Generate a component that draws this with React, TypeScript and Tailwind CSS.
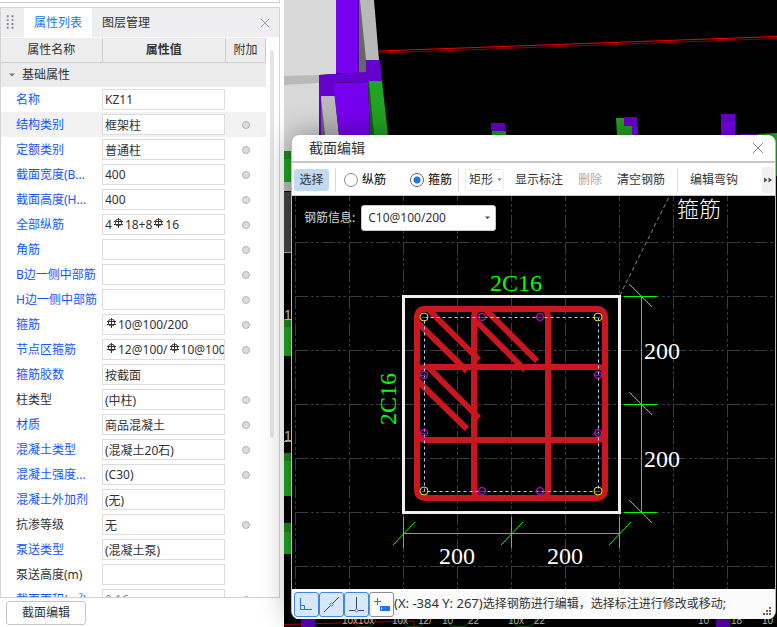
import { useState } from "react";
import type { ReactNode } from "react";

type Property = {
  name: string;
  value: string;
  plain?: boolean;
  extra?: boolean;
  active?: boolean;
  readOnly?: boolean;
};

// "&" marks the ribbed bar sign inside a value
const PROPERTIES: Property[] = [
  { name: "名称", value: "KZ11" },
  { name: "结构类别", value: "框架柱", extra: true, active: true },
  { name: "定额类别", value: "普通柱", extra: true },
  { name: "截面宽度(B...", value: "400", extra: true },
  { name: "截面高度(H...", value: "400", extra: true },
  { name: "全部纵筋", value: "4&18+8&16", extra: true },
  { name: "角筋", value: "", extra: true },
  { name: "B边一侧中部筋", value: "", extra: true },
  { name: "H边一侧中部筋", value: "", extra: true },
  { name: "箍筋", value: "&10@100/200", extra: true },
  { name: "节点区箍筋", value: "&12@100/&10@100", extra: true },
  { name: "箍筋胶数", value: "按截面" },
  { name: "柱类型", value: "(中柱)", plain: true, extra: true },
  { name: "材质", value: "商品混凝土", extra: true },
  { name: "混凝土类型", value: "(混凝土20石)", extra: true },
  { name: "混凝土强度...", value: "(C30)", extra: true },
  { name: "混凝土外加剂", value: "(无)" },
  { name: "抗渗等级", value: "无", plain: true, extra: true },
  { name: "泵送类型", value: "(混凝土泵)" },
  { name: "泵送高度(m)", value: "", plain: true },
  { name: "截面面积(m²)", value: "0.16", extra: true, readOnly: true },
];

const GRID_X = [295, 349, 403, 457, 511, 565, 619, 673, 727];
const GRID_Y = [242, 296, 350, 404, 458, 512, 566];

const CORNER_BARS = [
  [424, 317],
  [598, 317],
  [424, 491],
  [598, 491],
];

const SIDE_BARS = [
  [482, 317],
  [540, 317],
  [424, 375],
  [598, 375],
  [424, 433],
  [598, 433],
  [482, 491],
  [540, 491],
];

function BarSign() {
  return (
    <svg
      viewBox="0 0 13 12"
      className="inline-block h-3 w-[13px] align-baseline"
      fill="none"
      stroke="#333"
      aria-hidden="true"
    >
      <path d="M6.5 1v10M2 4.5h9M2 7.5h9" />
      <rect x="3.5" y="2.5" width="6" height="6" rx="2" />
    </svg>
  );
}

function CloseIcon({ className }: { className: string }) {
  return (
    <svg viewBox="0 0 12 12" className={className} fill="none" stroke="currentColor">
      <path d="M1 1l10 10M11 1L1 11" />
    </svg>
  );
}

function Caret({ className }: { className: string }) {
  return (
    <svg viewBox="0 0 6 4" className={className} fill="currentColor" aria-hidden="true">
      <path d="M0 0.5h6L3 3.5z" />
    </svg>
  );
}

function PropertyField({ id, property }: { id: string; property: Property }) {
  const box =
    "block h-[21px] w-full overflow-hidden border border-[#dcdcdc] bg-white px-[2px] text-[12px] leading-[19px] whitespace-nowrap outline-none focus:border-[#1b76e8]";

  if (property.value.includes("&")) {
    const parts = property.value.split("&");
    return (
      <div
        id={id}
        role="textbox"
        aria-label={property.name}
        contentEditable
        suppressContentEditableWarning
        className={box}
      >
        {parts.map((part, i) => (
          <span key={i}>
            {i > 0 && <BarSign />}
            {part}
          </span>
        ))}
      </div>
    );
  }

  return (
    <input
      id={id}
      type="text"
      defaultValue={property.value}
      readOnly={property.readOnly}
      className={property.readOnly ? `${box} text-[#888]` : box}
    />
  );
}

function PropertyTable() {
  return (
    <table className="w-full table-fixed border-collapse text-[12px]">
      <colgroup>
        <col className="w-[101px]" />
        <col />
        <col className="w-10" />
      </colgroup>
      <thead>
        <tr className="h-6 bg-[#ededee]">
          <th className="border-r border-b border-[#cdcdcf] p-0 font-normal">属性名称</th>
          <th className="border-r border-b border-[#cdcdcf] p-0 font-bold">属性值</th>
          <th className="border-r border-b border-[#cdcdcf] p-0 font-normal">附加</th>
        </tr>
      </thead>
      <tbody>
        <tr className="h-[25px] bg-[#ececec]">
          <th colSpan={3} className="p-0 text-left font-normal">
            <button type="button" className="flex items-center gap-[7px] pl-2">
              <Caret className="w-[6px] text-[#777]" />
              基础属性
            </button>
          </th>
        </tr>
        {PROPERTIES.map((property, i) => (
          <tr key={property.name} className={property.active ? "h-[25px] bg-[#f2f2f2]" : "h-[25px]"}>
            <td className="p-0 pl-[15px]">
              <label
                htmlFor={`property-${i}`}
                className={
                  property.plain
                    ? "block truncate text-[#333]"
                    : "block overflow-hidden whitespace-nowrap text-[#1456ff]"
                }
              >
                {property.name}
              </label>
            </td>
            <td className="p-0 pr-px">
              <PropertyField id={`property-${i}`} property={property} />
            </td>
            <td className="p-0 text-center">
              {property.extra && (
                <input
                  type="checkbox"
                  aria-label={`附加 ${property.name}`}
                  className="mx-auto block size-2 appearance-none rounded-full border border-[#b4b4ba] bg-[#dcdce0] checked:bg-[#1b76e8]"
                />
              )}
            </td>
          </tr>
        ))}
      </tbody>
    </table>
  );
}

function PropertyPanel() {
  return (
    <aside className="flex w-[284px] shrink-0 flex-col bg-white">
      <div className="mr-1 h-[3px] shrink-0 border-r border-b border-[#cfcfd2]" />
      <section className="mt-1 mr-1 flex min-h-0 flex-1 flex-col border border-[#d4d4d6]">
        <div className="flex h-[29px] shrink-0 items-stretch bg-[#eeeef0] text-[12px]">
          <svg viewBox="0 0 24 29" className="w-[23px]" fill="#888" aria-hidden="true">
            {[7, 11, 15, 19].map((y) => (
              <path key={y} d={`M6 ${y}h2v2h-2zM11 ${y}h2v2h-2z`} />
            ))}
          </svg>
          <div role="tablist" className="flex flex-1">
            <button type="button" role="tab" aria-selected="true" className="bg-white px-[10px] text-[#1b76e8]">
              属性列表
            </button>
            <button type="button" role="tab" aria-selected="false" className="px-[10px]">
              图层管理
            </button>
          </div>
          <button type="button" aria-label="关闭" className="px-[9px] text-[#999]">
            <CloseIcon className="size-[10px]" />
          </button>
        </div>
        <div className="mt-px flex min-h-0 flex-1 overflow-hidden">
          <div className="min-w-0 flex-1">
            <PropertyTable />
          </div>
          <div className="w-[13px] shrink-0 pt-3 pl-1">
            <div className="h-[71%] w-1 rounded-full bg-[#e6e6e8]" />
          </div>
        </div>
      </section>
      <div className="flex shrink-0 px-[6px] pt-[3px] pb-[2px]">
        <button type="button" className="h-6 w-20 rounded-[3px] border border-[#c6c6c8] bg-white text-[12px]">
          截面编辑
        </button>
      </div>
    </aside>
  );
}

function ModelView() {
  return (
    <svg
      viewBox="284 0 493 627"
      preserveAspectRatio="xMinYMin slice"
      className="absolute inset-0 size-full"
      aria-hidden="true"
    >
      <path fill="#d8d8d8" d="M284 0h52v74l-17 1v76h-35z" />
      <path fill="#b9b9b9" d="M284 76l35-1v8l-35 2z" />
      <path fill="#7700ee" d="M336 0h21v73h-21z" />
      <path fill="#4f00a0" d="M357 0h2v73h-2z" />
      <path fill="#666" d="M359 0h2l6 62v11h-8z" />
      <path fill="#b9b9b9" d="M360 0h14l5 60h-13z" />
      <path fill="#6600cc" d="M319 75l47-3V60h14l2 21-49 2 2 13h-14v39h-2z" />
      <path fill="#b9b9b9" d="M321 96h14l4 39h-18z" />
      <path fill="#666" d="M321 98l4 37h-4z" />
      <path fill="#7700ee" d="M333 83l35-1 2 53h-31z" />
      <path fill="#14621a" d="M368 82h2l4 53h-4z" />
      <path fill="#22a322" d="M369 81h13l6 54h-14z" />
      <path stroke="#8c0000" d="M379 53L777 38.500" />
      <path stroke="#f00000" d="M379 51L777 36.500" />
      <path fill="#6600cc" d="M491 123h14v8h-14z" />
      <path fill="#22a322" d="M492 131h14v5h-14z" />
      <path fill="#22a322" d="M616 118h9v8h7v10h-15z" />
      <path fill="#6600cc" d="M624 117h13v9h-13z" />
      <path fill="#7700ee" d="M632 126h6v10h-6z" />
      <path fill="#6600cc" d="M721 114h14v8h-14z" />
      <path fill="#7700ee" d="M721 122h14v14h-14z" />
      <path fill="#6600cc" d="M740 134h20v3h-20z" />
      <path fill="#22a322" d="M758 134l19-1v43h-6z" />
      <path fill="#1f8a20" d="M284 151h8v8h-8zM284 319h8v8h-8zM284 453h8v8h-8zM284 523h8v9h-8z" />
      <path fill="#22a922" d="M284 159h8v23h-8zM284 327h8v29h-8zM284 461h8v35h-8zM284 532h8v22h-8z" />
      <path fill="#c4c4c4" d="M284 182h8v9h-8z" />
      <path fill="#484848" d="M284 192h8v60h-8z" />
      <path stroke="#aaa" d="M284 252.500h8M284 441.500h8" />
      <path
        stroke="#14621a"
        fill="none"
        d="M352 619a12 8 0 0 0 24 0M402 619a12 8 0 0 0 24 0M446 619a12 8 0 0 0 24 0M512 619a12 8 0 0 0 24 0"
      />
      <path stroke="#c00000" d="M284 624.500L414 621v6" fill="none" />
      <path fill="#5c00b8" d="M301 619h14v8h-14zM716 619h14v8h-14z" />
      <g fill="#d0d0d0" className="font-['Liberation_Sans']">
        <g className="text-[14px]">
          <text x="284" y="320">1</text>
          <text x="284" y="441">1</text>
        </g>
        <g className="text-[10px]">
          <text x="342" y="624">10x10x</text>
          <text x="392" y="624">10x</text>
          <text x="418" y="624">12/</text>
          <text x="442" y="624">10</text>
          <text x="468" y="624">22</text>
          <text x="508" y="624">10x</text>
          <text x="534" y="624">22</text>
          <text x="698" y="624">10</text>
          <text x="731" y="624">18</text>
          <text x="762" y="624">10</text>
        </g>
      </g>
    </svg>
  );
}

function SectionDrawing() {
  return (
    <svg
      viewBox="292 196 483 393"
      preserveAspectRatio="xMinYMin meet"
      className="absolute inset-0 size-full"
      fill="none"
      role="img"
      aria-label="柱截面配筋"
    >
      <g stroke="#343b48" strokeDasharray="13 3 3 2 3 3" shapeRendering="crispEdges">
        {GRID_X.map((x) => (
          <path key={x} d={`M${x + 0.5} 188V589`} />
        ))}
        {GRID_Y.map((y) => (
          <path key={y} d={`M295 ${y + 0.5}H775`} />
        ))}
      </g>

      <path stroke="#8a8a8a" strokeDasharray="4 3" d="M668.500 198L620 295" />

      {/* Concrete outline */}
      <rect x="403.500" y="296.500" width="216" height="216" stroke="#f0f0f0" strokeWidth="3" />

      {/* Stirrups and their hooks */}
      <g stroke="#c8171e" strokeWidth="6">
        <rect x="417" y="309" width="188" height="189" rx="7" />
        <rect x="474" y="309" width="74" height="189" rx="7" />
        <rect x="417" y="367" width="188" height="73" rx="7" />
        <path d="M418 323l49 48M428 309l51 51M476 321l49 49M486 310l51 51M418 381l49 48M428 367l51 51" />
      </g>

      <rect x="424.500" y="317.500" width="174" height="174" stroke="#b4d0f4" strokeDasharray="3 3" />

      <g stroke="#f0e020">
        {CORNER_BARS.map(([x, y]) => (
          <g key={`${x}-${y}`}>
            <circle cx={x} cy={y} r="4" />
            <path stroke="#6b6414" d={`M${x - 2} ${y + 0.5}h4`} />
          </g>
        ))}
      </g>
      <g stroke="#ff00ff">
        {SIDE_BARS.map(([x, y]) => (
          <g key={`${x}-${y}`}>
            <circle cx={x} cy={y} r="3.500" />
            <path stroke="#8a108a" d={`M${x - 2} ${y + 0.5}h4`} />
          </g>
        ))}
      </g>

      {/* Dimension lines */}
      <g stroke="#00ff00">
        <path
          shapeRendering="crispEdges"
          d="M403 533.500h217M403.500 517v31M511.500 517v31M619.500 517v31M641.500 296v217M624 296.500h33M624 404.500h33M624 512.500h33"
        />
        <path d="M393 545l22-23M501 545l22-23M609 545l22-23M629 284l23 23M629 392l23 23M629 500l23 23" />
      </g>

      <g className="font-['Liberation_Serif','Noto_Sans_CJK_SC',serif] text-[24px]">
        <g fill="#00ff00" textAnchor="middle">
          <text x="516" y="291">2C16</text>
          <text transform="translate(396 399) rotate(-90)">2C16</text>
        </g>
        <g fill="#fff">
          <text x="439" y="564">200</text>
          <text x="547" y="564">200</text>
          <text x="644" y="359">200</text>
          <text x="644" y="467">200</text>
        </g>
      </g>
      <text x="677" y="217" fill="#fff" className="font-['Noto_Sans_CJK_SC',sans-serif] text-[22px] font-light">
        箍筋
      </text>
    </svg>
  );
}

function ToolRadio({
  label,
  checked,
  onSelect,
}: {
  label: string;
  checked: boolean;
  onSelect: () => void;
}) {
  return (
    <label className="flex shrink-0 items-center gap-1 text-black">
      <input
        type="radio"
        name="bar-kind"
        checked={checked}
        onChange={onSelect}
        className="size-[14px] appearance-none rounded-full border border-[#888] bg-white checked:border-[#666] checked:bg-[radial-gradient(circle,#1b76e8_3px,white_4px)]"
      />
      {label}
    </label>
  );
}

function Divider() {
  return <span className="h-6 w-px shrink-0 bg-[#d8d8da]" />;
}

function SnapButton({ label, on, children }: { label: string; on?: boolean; children: ReactNode }) {
  return (
    <button
      type="button"
      aria-label={label}
      aria-pressed={Boolean(on)}
      className={
        on
          ? "size-[25px] shrink-0 rounded-[3px] border border-[#3d87e8] bg-[#d9e7fb]"
          : "size-[25px] shrink-0 rounded-[3px] border border-[#8c8c8c] bg-white"
      }
    >
      <svg viewBox="0 0 23 23" className="size-[23px]" fill="none" stroke="#33475f">
        {children}
      </svg>
    </button>
  );
}

function SectionDialog() {
  const [kind, setKind] = useState("箍筋");

  return (
    <div
      role="dialog"
      aria-label="截面编辑"
      className="absolute top-[135px] right-px bottom-2 left-[7px] flex flex-col overflow-hidden rounded-lg border-x border-[#b8babd] bg-white shadow-[0_0_30px_rgba(0,0,0,0.4)]"
    >
      <header className="flex h-7 shrink-0 items-center justify-between border-b-2 border-[#c6c7c9] pr-[11px] pl-[17px]">
        <h2 className="text-[14px] leading-6">截面编辑</h2>
        <button type="button" aria-label="关闭" className="text-[#888]">
          <CloseIcon className="size-3" />
        </button>
      </header>

      <div className="flex h-[33px] shrink-0 items-center border-b border-[#c6c7c9] pt-[2px] pr-px pl-[2px] text-[12px]">
        <button type="button" aria-pressed="true" className="h-[22px] w-[35px] shrink-0 rounded-[3px] bg-[#c1d9f1]">
          选择
        </button>
        <div className="flex items-center pl-[6px]">
          <Divider />
        </div>
        <div className="flex gap-6 pr-[6px] pl-2">
          <ToolRadio label="纵筋" checked={kind === "纵筋"} onSelect={() => setKind("纵筋")} />
          <ToolRadio label="箍筋" checked={kind === "箍筋"} onSelect={() => setKind("箍筋")} />
        </div>
        <Divider />
        <div className="relative ml-[6px] shrink-0">
          <select
            aria-label="箍筋形状"
            className="block h-[22px] w-[39px] appearance-none rounded-[3px] border border-[#ececee] bg-white pl-[3px]"
          >
            <option>矩形</option>
          </select>
          <Caret className="pointer-events-none absolute top-[9px] right-[2px] w-[5px] text-[#888]" />
        </div>
        <div className="flex min-w-0 flex-1 items-center gap-[15px] pl-[11px] whitespace-nowrap">
          <button type="button">显示标注</button>
          <button type="button" disabled className="text-[#aaa]">
            删除
          </button>
          <button type="button">清空钢筋</button>
        </div>
        <div className="flex shrink-0 items-center gap-3">
          <Divider />
          <button type="button">编辑弯钩</button>
        </div>
        <button
          type="button"
          aria-label="更多"
          className="ml-6 flex h-[26px] w-3 shrink-0 items-center justify-center rounded-[3px] bg-[#f1f1f2]"
        >
          <svg viewBox="0 0 8 6" className="w-2" fill="#4a5058">
            <path d="M0 0.500l3.500 2.500L0 5.500zM4.500 0.500L8 3 4.500 5.500z" />
          </svg>
        </button>
      </div>

      <div className="relative min-h-0 flex-1 bg-black">
        <SectionDrawing />
        <div className="absolute top-[9px] left-3 flex items-center gap-[6px] text-[12px]">
          <label htmlFor="bar-info" className="text-[#d8d8d8]">
            钢筋信息:
          </label>
          <div className="relative">
            <select
              id="bar-info"
              className="block h-[26px] w-[135px] appearance-none rounded-[3px] border border-[#c8c8c8] bg-white pl-[6px]"
            >
              <option>C10@100/200</option>
            </select>
            <Caret className="pointer-events-none absolute top-[11px] right-[6px] w-[5px] text-[#444]" />
          </div>
        </div>
      </div>

      <footer className="flex h-[30px] shrink-0 items-center bg-[#fbfbfb] pr-1 pl-[2px] text-[12px]">
        <SnapButton label="正交" on>
          <path stroke="#2f6fd0" d="M5.500 5v11.500H17M5.500 12.500h4v4" />
        </SnapButton>
        <SnapButton label="中点" on>
          <path d="M4 19L19 4" />
          <circle cx="11.500" cy="11.500" r="1.500" stroke="#3d87e8" fill="#fff" />
        </SnapButton>
        <SnapButton label="垂足" on>
          <path d="M11.500 4v13M4 17.500h15" />
          <circle cx="11.500" cy="17.500" r="1.500" stroke="#3d87e8" fill="#fff" />
        </SnapButton>
        <SnapButton label="动态输入">
          <path stroke="#1b76e8" d="M7.500 5v7M4 8.500h7" />
          <path stroke="none" fill="#1b76e8" d="M10 13h10v5H10z" />
          <path stroke="#fff" d="M11.500 14.500v2" />
        </SnapButton>
        <output className="min-w-0 flex-1 overflow-hidden whitespace-nowrap">
          <span className="text-[13px]">(X: -384 Y: 267)</span>
          选择钢筋进行编辑，选择标注进行修改或移动;
        </output>
        <svg viewBox="0 0 8 8" className="mb-1 size-2 shrink-0 self-end" fill="#666" aria-hidden="true">
          <path d="M6 0h2v2h-2zM3 3h2v2h-2zM6 3h2v2h-2zM0 6h2v2h-2zM3 6h2v2h-2zM6 6h2v2h-2z" />
        </svg>
      </footer>
    </div>
  );
}

export default function App() {
  return (
    <div className="flex h-screen overflow-hidden bg-black font-['Noto_Sans','Noto_Sans_CJK_SC',sans-serif] text-[#333]">
      <PropertyPanel />
      <main className="relative min-w-0 flex-1">
        <ModelView />
        <SectionDialog />
      </main>
    </div>
  );
}
